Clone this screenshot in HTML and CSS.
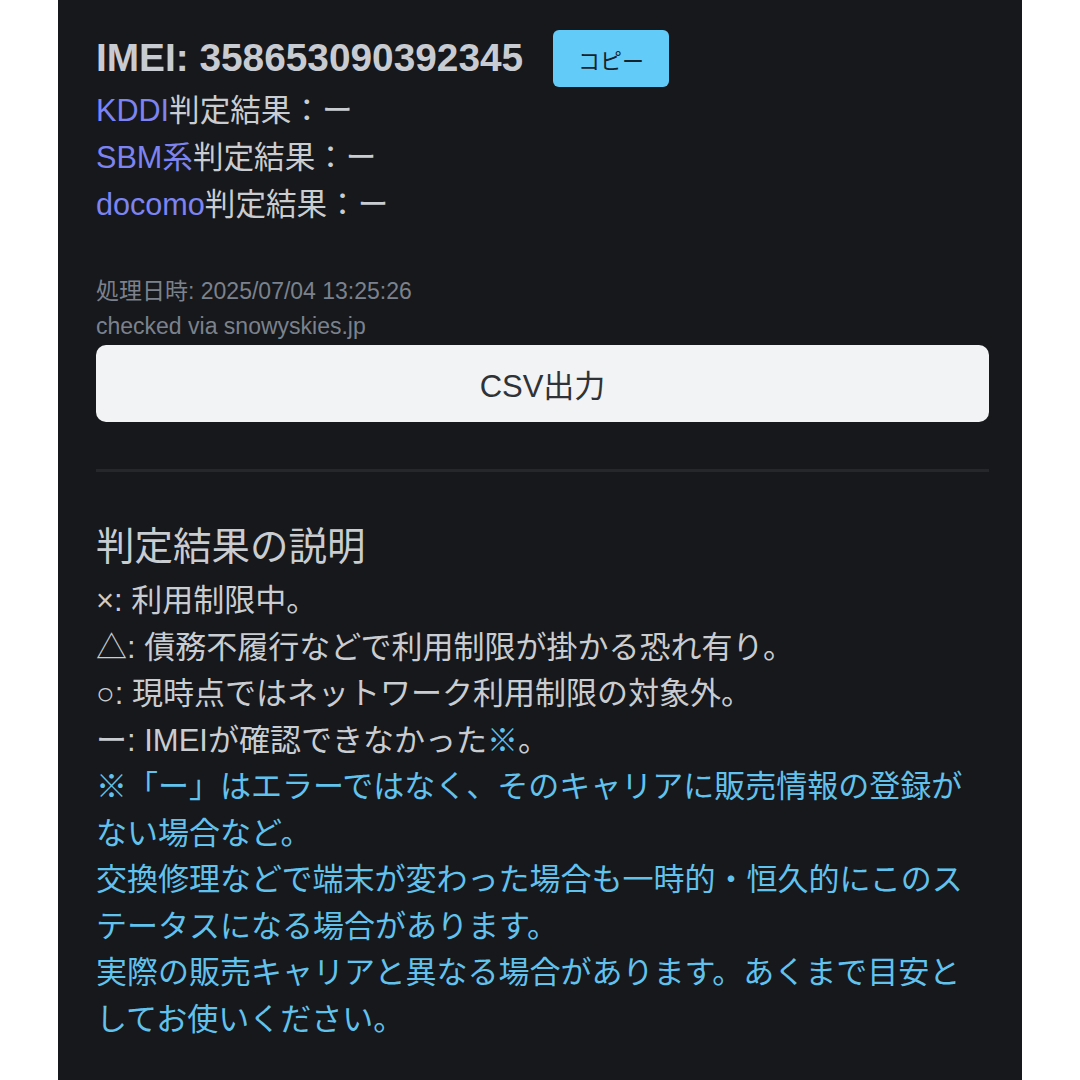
FILE: index.html
```html
<!DOCTYPE html>
<html lang="ja">
<head>
    <meta charset="UTF-8">
    <meta name="viewport" content="width=device-width, initial-scale=1.0">
    <title>IMEI 判定結果</title>
    <link rel="stylesheet" href="styles.css">
</head>
<body>
    <div class="panel">
        <div class="imei-row">
            <h2 class="imei">IMEI: 358653090392345</h2>
            <button class="copy-btn" type="button">コピー</button>
        </div>

        <div class="results">
            <div><span class="carrier">KDDI</span>判定結果：ー</div>
            <div><span class="carrier">SBM系</span>判定結果：ー</div>
            <div><span class="carrier">docomo</span>判定結果：ー</div>
        </div>

        <div class="meta">
            <div>処理日時: 2025/07/04 13:25:26</div>
            <div>checked via snowyskies.jp</div>
        </div>

        <button class="csv-btn" type="button">CSV出力</button>

        <hr class="divider">

        <h3 class="legend-title">判定結果の説明</h3>
        <div class="legend">
            <div>×: 利用制限中。</div>
            <div>△: 債務不履行などで利用制限が掛かる恐れ有り。</div>
            <div>○: 現時点ではネットワーク利用制限の対象外。</div>
            <div>ー: IMEIが確認できなかった<span class="note-mark">※</span>。</div>
            <div class="note">
                ※「ー」はエラーではなく、そのキャリアに販売情報の登録が<br>ない場合など。<br>
                交換修理などで端末が変わった場合も一時的・恒久的にこのス<br>テータスになる場合があります。<br>
                実際の販売キャリアと異なる場合があります。あくまで目安と<br>してお使いください。
            </div>
        </div>
    </div>
</body>
</html>
```

FILE: styles.css
```css
body {
    margin: 0;
    background-color: #fff;
    font-family: "Liberation Sans", "Noto Sans CJK JP", sans-serif;
}
.panel {
    margin-left: 58px;
    width: 964px;
    min-height: 1080px;
    box-sizing: border-box;
    padding: 30px 33px 0 38px;
    background-color: #17181b;
    color: #c9cdd2;
    line-break: strict;
}
.imei-row {
    display: flex;
    align-items: center;
    gap: 30px;
}
.imei {
    margin: 0;
    font-size: 38.8px;
    line-height: 1.2;
    font-weight: bold;
    color: #c8ccd2;
}
.copy-btn {
    width: 116px;
    height: 57px;
    border: none;
    border-radius: 6px;
    background-color: #63cbf7;
    color: #15232e;
    font-family: inherit;
    font-size: 22px;
    cursor: pointer;
}
.results {
    font-size: 30.6px;
    line-height: 47px;
}
.carrier {
    color: #7d84f2;
}
.meta {
    margin-top: 46px;
    font-size: 23px;
    line-height: 35px;
    color: #7b828e;
}
.csv-btn {
    display: block;
    width: 100%;
    height: 77px;
    margin-top: 1px;
    border: none;
    border-radius: 10px;
    background-color: #f2f3f4;
    color: #2f3236;
    font-family: inherit;
    font-size: 31px;
    cursor: pointer;
}
.divider {
    margin: 47px 0 0;
    border: none;
    height: 3px;
    background-color: #25272b;
}
.legend-title {
    margin: 50px 0 0;
    font-size: 38.5px;
    font-weight: normal;
    line-height: 50px;
    color: #c9cdd2;
}
.legend {
    margin-top: 6px;
    font-size: 31px;
    line-height: 46.5px;
    white-space: nowrap;
}
.note-mark,
.note {
    color: #62c2ee;
}
```
